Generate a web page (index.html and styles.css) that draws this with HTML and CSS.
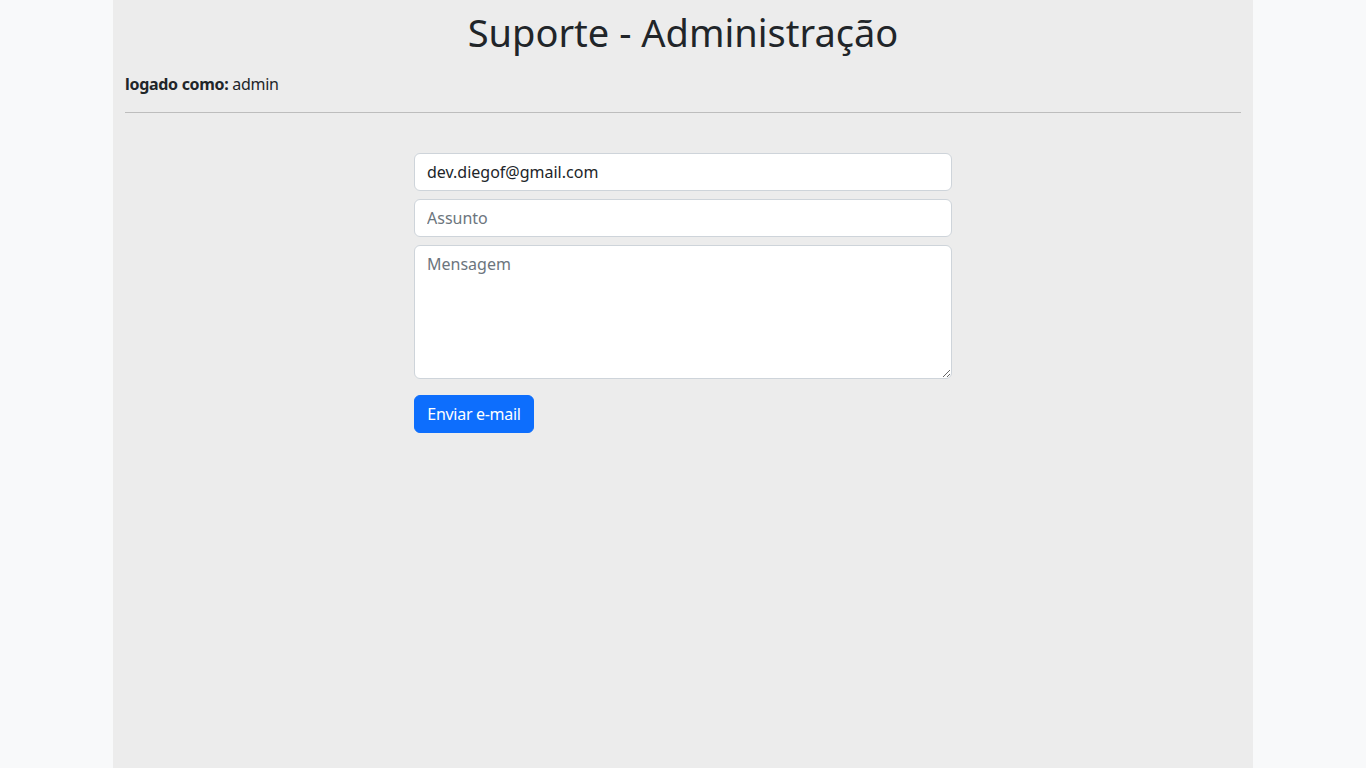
FILE: index.html
```html
<!DOCTYPE html>
<html lang="pt-BR">
<head>
<meta charset="utf-8">
<title>Suporte - Administração</title>
<link rel="stylesheet" href="styles.css">
</head>
<body>
<div class="container">
  <h1 class="title">Suporte - Administração</h1>
  <p class="user"><strong>logado como:</strong> admin</p>
  <hr class="divider">
  <form class="mail-form">
    <input class="field" type="email" value="dev.diegof@gmail.com">
    <input class="field" type="text" placeholder="Assunto">
    <textarea class="field area" placeholder="Mensagem"></textarea>
    <div class="actions"><button class="btn" type="button">Enviar e-mail</button></div>
  </form>
</div>
</body>
</html>
```
FILE: styles.css
```css
* { box-sizing: border-box; }
html, body { height: 100%; }
body {
  margin: 0;
  background: #f8f9fa;
  font-family: "Noto Sans", "Open Sans", sans-serif;
  font-size: 16px;
  line-height: 1.5;
  color: #212529;
}
.container {
  width: 1140px;
  margin: 0 auto;
  min-height: 100%;
  background: #ececec;
  padding: 8px 12px 0;
}
.title {
  margin: 0 0 16px;
  height: 48px;
  text-align: center;
  font-size: 38px;
  font-weight: 400;
  line-height: 48px;
}
.user { margin: 0 0 16px; letter-spacing: -0.3px; }
.user strong { font-weight: 700; }
.divider {
  margin: 0 0 40px;
  border: 0;
  border-top: 1px solid #bdbdbd;
}
.mail-form {
  width: 538px;
  margin: 0 auto;
  display: flex;
  flex-direction: column;
  gap: 8px;
}
.field {
  display: block;
  width: 100%;
  height: 38px;
  padding: 6px 12px;
  font: inherit;
  color: #212529;
  background: #fff;
  border: 1px solid #ced4da;
  border-radius: 6px;
  outline: none;
}
.field::placeholder { color: #6c757d; }
.area { height: 134px; resize: vertical; }
.actions { padding-top: 8px; }
.btn {
  height: 38px;
  width: 120px;
  padding: 6px 0;
  white-space: nowrap;
  font: inherit;
  letter-spacing: -0.3px;
  color: #fff;
  background: #0d6efd;
  border: 1px solid #0d6efd;
  border-radius: 6px;
}
```
